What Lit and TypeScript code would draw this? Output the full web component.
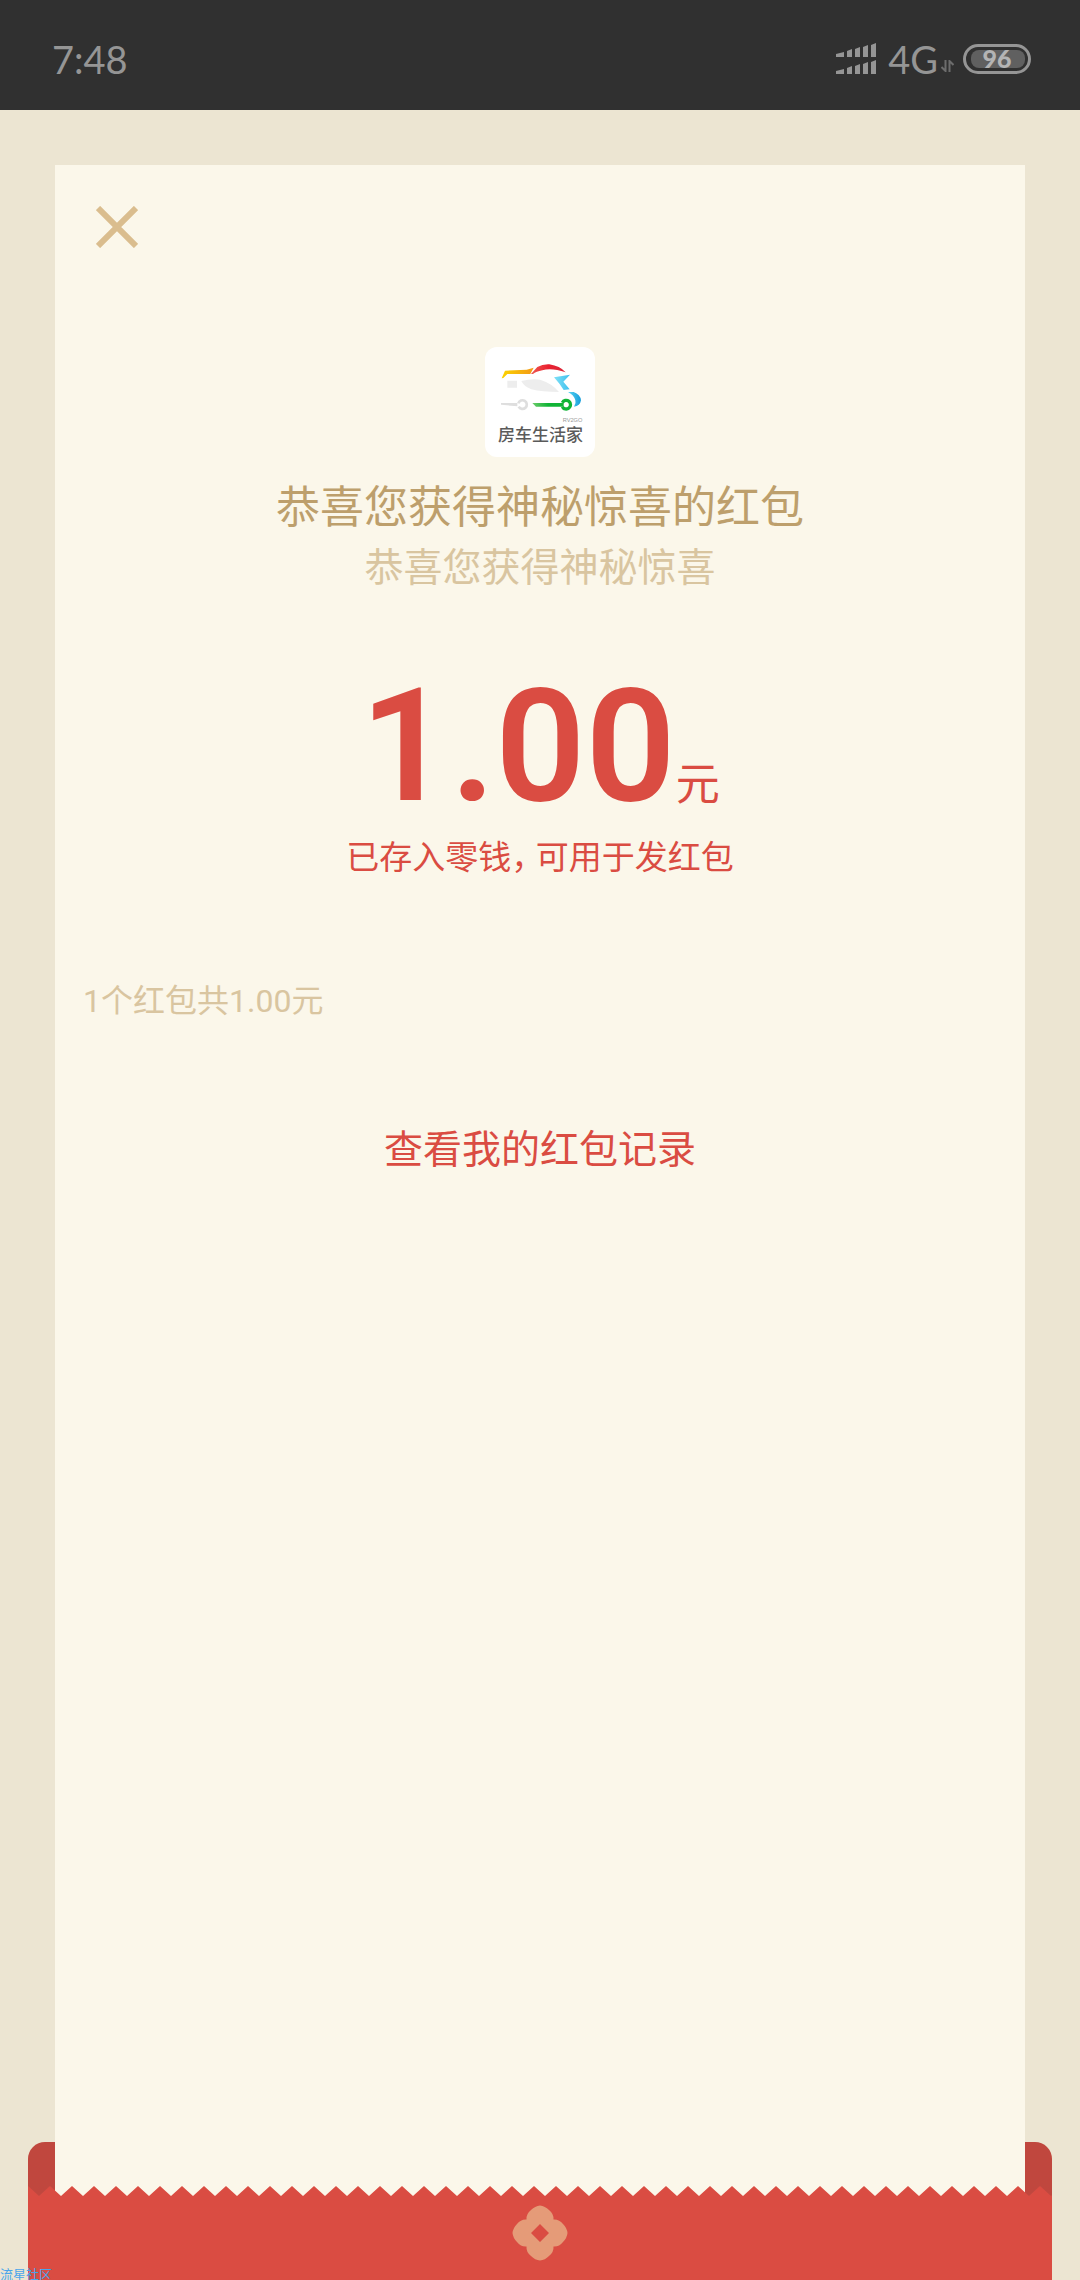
import { LitElement, html, svg, css } from "lit";
import { customElement, property } from "lit/decorators.js";

@customElement("status-bar")
class StatusBar extends LitElement {
  @property() time = "";
  @property() battery = "";

  static styles = css`
    :host {
      display: flex;
      align-items: center;
      justify-content: space-between;
      height: 110px;
      padding: 8px 49px 0 52px;
      box-sizing: border-box;
      background: #303030;
      color: #959595;
      font-family: Lato, "Liberation Sans", sans-serif;
      font-size: 38px;
      line-height: 48px;
    }
    .status {
      display: flex;
      align-items: center;
    }
    .signal {
      margin: 0 12px 2px 0;
    }
    .arrows {
      margin: 14px 9px 0 3px;
    }
    svg {
      display: block;
    }
    .level {
      font-family: Lato, sans-serif;
      font-size: 25px;
      font-weight: 900;
      fill: #b4b4b4;
    }
  `;

  render() {
    const bars = [0, 1, 2, 3, 4].map((i) => {
      const x = i === 0 ? 0 : 3 + i * 8;
      const w = i === 0 ? 8 : 5;
      const top = [9, 6, 4, 2, 0][i];
      return svg`
        <path d="M${x} ${top + 2}L${x + w} ${top}V14H${x}Z" />
        <path d="M${x} ${top + 19}L${x + w} ${top + 17}V31H${x}Z" />`;
    });
    return html`
      <time>${this.time}</time>
      <div class="status">
        <svg class="signal" width="40" height="31" viewBox="0 0 40 31" fill="#959595">${bars}</svg>
        <span>4G</span>
        <svg class="arrows" width="13" height="12" viewBox="0 0 13 12" fill="none" stroke="#6c6c6c" stroke-width="2">
          <path d="M4.500 0v11L0.500 7M8.500 12V1l4 4" />
        </svg>
        <svg width="68" height="30" viewBox="0 0 68 30">
          <rect x="1.500" y="1.500" width="65" height="27" rx="13.500" fill="none" stroke="#959595" stroke-width="3" />
          <rect x="8" y="6" width="54" height="18" rx="8" fill="#606060" />
          <text class="level" x="34" y="24" text-anchor="middle">${this.battery}</text>
        </svg>
      </div>
    `;
  }
}

@customElement("sender-logo")
class SenderLogo extends LitElement {
  static styles = css`
    :host {
      display: block;
      width: 110px;
      height: 110px;
      border-radius: 12px;
      background: #fff;
      overflow: hidden;
    }
    svg {
      display: block;
    }
    .name {
      font-family: "Noto Sans CJK SC", sans-serif;
      font-size: 51px;
      font-weight: 500;
      fill: #5a5a5a;
    }
    .tag {
      font-family: "Liberation Sans", sans-serif;
      font-size: 17px;
      fill: #999;
    }
  `;

  render() {
    return html`
      <svg width="110" height="110" viewBox="45 36 330 330" role="img" aria-label="房车生活家">
        <defs>
          <linearGradient id="roof"><stop offset="0" stop-color="#fbd300" /><stop offset="1" stop-color="#f39a17" /></linearGradient>
          <linearGradient id="top"><stop offset="0" stop-color="#ee5a50" /><stop offset=".5" stop-color="#ea2030" /><stop offset="1" stop-color="#d8283a" /></linearGradient>
          <linearGradient id="base"><stop offset="0" stop-color="#6ccb6a" /><stop offset=".5" stop-color="#10b436" /></linearGradient>
          <linearGradient id="wing"><stop offset="0" stop-color="#7fe0f6" /><stop offset="1" stop-color="#3fc0ee" /></linearGradient>
          <linearGradient id="nose"><stop offset="0" stop-color="#59d4f2" /><stop offset="1" stop-color="#179edb" /></linearGradient>
        </defs>
        <path fill="url(#roof)" d="M95 130L105 107L170 104L191 98L181 117H112L100 129Z" />
        <path fill="url(#top)" d="M183 117L202 96Q218 87 238 88Q270 93 287 112Q245 98 217 106Q198 110 189 117Z" />
        <path fill="url(#wing)" d="M252 127L300 119L280 140L299 163L281 165Q270 147 252 127Z" />
        <path fill="url(#nose)" d="M294 171H311Q331 178 333 196Q330 214 312 215Q319 205 316 196Q312 180 294 171Z" />
        <path fill="#ededed" d="M112 137H141V158H112Z" />
        <path fill="#ededed" d="M154 138Q183 131 210 134Q246 145 267 171Q216 171 184 163Q160 153 154 138Z" />
        <path fill="#dedede" d="M93 204H142V214L93 209Z" />
        <path fill="none" stroke="#dedede" stroke-width="8" d="M145 205A13 13 0 1 1 146 215" />
        <path fill="url(#base)" d="M187 204H281V215H198Z" />
        <path fill="none" stroke="#10b436" stroke-width="10" d="M277 203A13 13 0 1 1 277 215" />
        <text class="tag" x="278" y="262">RV2GO</text>
        <text class="name" x="84" y="317">房车生活家</text>
      </svg>
    `;
  }
}

@customElement("app-root")
class AppRoot extends LitElement {
  static styles = css`
    :host {
      display: flex;
      flex-direction: column;
      min-height: 100vh;
      background: #ece5d2;
      font-family: "Noto Sans CJK SC", sans-serif;
    }
    .stage {
      position: relative;
      flex: 1;
      display: grid;
    }
    .back,
    .card,
    .front {
      grid-area: 1 / 1;
    }
    .back {
      align-self: end;
      height: 138px;
      margin: 0 28px;
      border-radius: 17px 17px 0 0;
      background: #c0473e;
    }
    .front {
      align-self: end;
      height: 94px;
      margin: 0 28px;
      display: flex;
      flex-direction: column;
      color: #da4c42;
    }
    .teeth {
      display: block;
      width: 100%;
      height: 10px;
    }
    .pocket {
      flex: 1;
      display: flex;
      justify-content: center;
      padding-top: 9px;
      background: #da4c42;
    }
    .card {
      display: flex;
      flex-direction: column;
      align-items: center;
      margin: 55px 55px 84px;
      background: #fbf7ea;
      color: #da4c42;
      text-align: center;
    }
    .close {
      align-self: flex-start;
      display: block;
      margin: 41px;
      padding: 0;
      border: 0;
      background: none;
      cursor: pointer;
    }
    .close svg,
    .flower {
      display: block;
    }
    sender-logo {
      margin: 58px 0 17px;
    }
    h1,
    p {
      margin: 0;
      font-weight: 400;
    }
    h1 {
      font-size: 44px;
      line-height: 60px;
      color: #bd9f6c;
    }
    .wish {
      font-size: 39px;
      line-height: 60px;
      color: #d9c5a0;
    }
    .amount {
      display: flex;
      align-items: baseline;
      margin-top: 72px;
    }
    .number {
      font-family: Roboto, "Noto Sans", sans-serif;
      font-size: 158px;
      font-weight: 600;
      line-height: 160px;
    }
    .unit {
      font-size: 44px;
      line-height: 48px;
    }
    .note {
      margin-top: 8px;
      font-family: "Liberation Sans", "Noto Sans CJK SC", sans-serif;
      font-size: 33px;
      line-height: 48px;
    }
    .comma {
      margin-right: 8px;
      font-feature-settings: "halt";
    }
    .summary {
      align-self: flex-start;
      margin: 95px 28px 0;
      font-family: Roboto, "Noto Sans CJK SC", sans-serif;
      font-size: 32px;
      line-height: 48px;
      color: #d9c5a0;
    }
    .record {
      margin-top: 91px;
      font-size: 39px;
      line-height: 60px;
      color: inherit;
      text-decoration: none;
    }
    .watermark {
      position: absolute;
      left: 0;
      bottom: 0;
      font-size: 13px;
      line-height: 13px;
      color: #4aa5ea;
    }
  `;

  render() {
    return html`
      <status-bar time="7:48" battery="96"></status-bar>
      <main class="stage">
        <div class="back"></div>
        <section class="card">
          <button class="close" aria-label="关闭">
            <svg width="42" height="42" viewBox="0 0 42 42" fill="none" stroke="#dabd8e" stroke-width="6">
              <path d="M2 2L40 40M40 2L2 40" />
            </svg>
          </button>
          <sender-logo></sender-logo>
          <h1>恭喜您获得神秘惊喜的红包</h1>
          <p class="wish">恭喜您获得神秘惊喜</p>
          <p class="amount"><span class="number">1.00</span><span class="unit">元</span></p>
          <p class="note">已存入零钱<span class="comma">，</span>可用于发红包</p>
          <p class="summary">1个红包共1.00元</p>
          <a class="record" href="#records">查看我的红包记录</a>
        </section>
        <div class="front">
          <svg class="teeth" aria-hidden="true">
            <defs>
              <pattern id="tooth" width="22" height="10" patternUnits="userSpaceOnUse">
                <path d="M0 0L11 10L22 0V10H0Z" fill="currentColor" />
              </pattern>
            </defs>
            <rect width="100%" height="10" fill="url(#tooth)" />
          </svg>
          <div class="pocket">
            <svg class="flower" width="56" height="56" viewBox="0 0 56 56" aria-hidden="true">
              <path
                fill="#e59b78"
                fill-rule="evenodd"
                d="M28 .5Q33 1 37 5Q42 9 41.500 14.500Q47 14 51 19Q55 23 55.500 28Q55 33 51 37Q47 42 41.500 41.500Q42 47 37 51Q33 55 28 55.500Q23 55 19 51Q14 47 14.500 41.500Q9 42 5 37Q1 33 .5 28Q1 23 5 19Q9 14 14.500 14.500Q14 9 19 5Q23 1 28 .5ZM28 19L19 28L28 37L37 28Z"
              />
            </svg>
          </div>
        </div>
        <span class="watermark">流星社区</span>
      </main>
    `;
  }
}
